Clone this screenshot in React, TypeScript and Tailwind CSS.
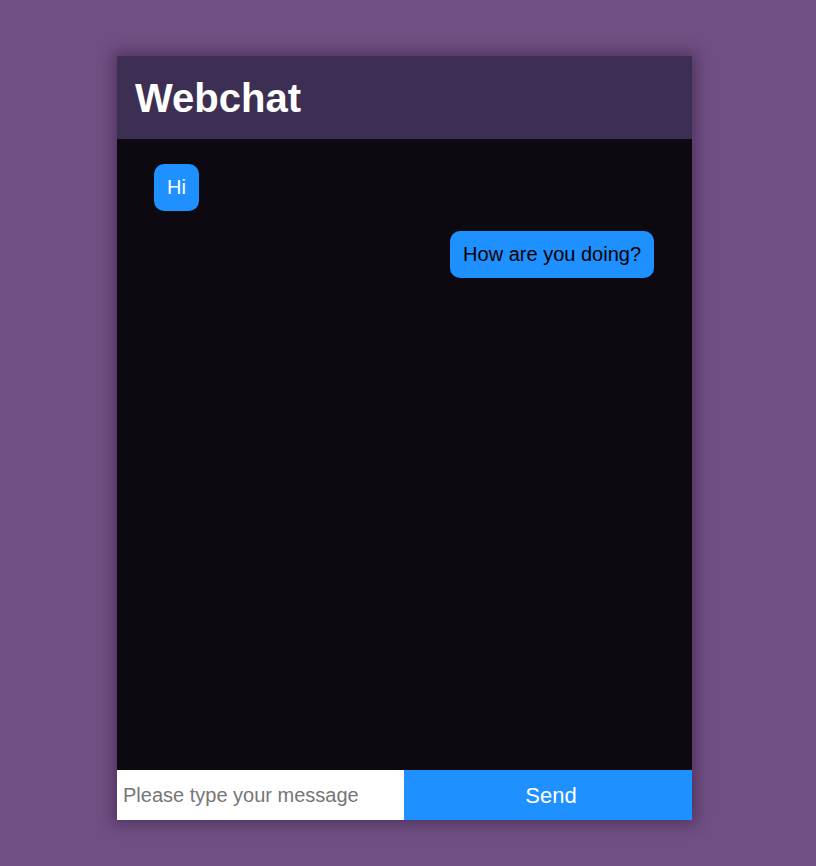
export default function App() {
  return (
    <div
      className="min-h-[866px] w-full bg-[#714f83] pt-[56px]"
      style={{ fontFamily: '"Liberation Sans", Arial, sans-serif' }}
    >
      <div className="ml-[117px] flex h-[764px] w-[575px] flex-col shadow-[0_0_14px_4px_rgba(40,20,55,0.45)]">
        <header className="flex h-[83px] items-center bg-[#3c2f53] px-[18px]">
          <h1 className="text-[40px] font-bold leading-none text-white">Webchat</h1>
        </header>
        <div className="flex flex-1 flex-col gap-[20px] bg-[#0c0a10] pl-[37px] pr-[38px] pt-[25px]">
          <div className="self-start rounded-[10px] bg-[#1e90ff] px-[13px] py-[12px] text-[20px] leading-[23px] text-white">
            Hi
          </div>
          <div className="self-end rounded-[10px] bg-[#1e90ff] px-[13px] py-[12px] text-[20px] leading-[23px] text-black">
            How are you doing?
          </div>
        </div>
        <div className="flex h-[50px]">
          <input
            className="w-[287px] bg-white px-[6px] text-[20px] text-black outline-none placeholder:text-[#767676]"
            placeholder="Please type your message"
          />
          <button className="flex-1 bg-[#1e90ff] pl-[6px] text-[22px] text-white">Send</button>
        </div>
      </div>
    </div>
  );
}
